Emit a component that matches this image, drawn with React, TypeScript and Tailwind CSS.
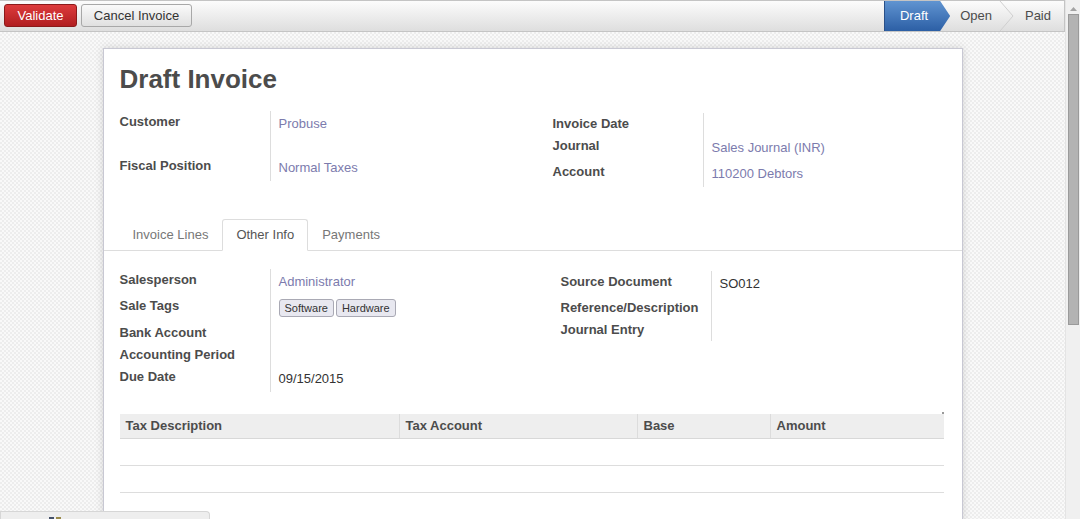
import React from "react"

type RowProps = {
  label: string
  h: string
  vp?: string
  children?: React.ReactNode
}

// one label / value line of a form group
function Row({ label, h, vp = "pt-[4px]", children }: RowProps) {
  return (
    <div className={`flex ${h}`}>
      <div className="w-[151px] shrink-0 border-r border-[#dddddd] pt-[2px] font-bold text-[#4c4c4c]">{label}</div>
      <div className={`flex-1 pl-[8px] ${vp}`}>{children}</div>
    </div>
  )
}

function Tag({ children }: { children: React.ReactNode }) {
  return (
    <span className="inline-block h-[18px] rounded-[3px] border border-[#a9a9b4] bg-[#e8e8f0] px-[5px] text-[11px] leading-[16px] text-[#333333]">
      {children}
    </span>
  )
}

const link = "text-[#7c7bad]"

export default function App() {
  return (
    <div className="flex h-[519px] w-[1080px] overflow-hidden bg-white font-['Liberation_Sans',Arial,sans-serif] text-[13px] leading-[18px] text-[#4c4c4c]">
      <div className="relative flex min-w-0 flex-1 flex-col">
        {/* top button bar */}
        <div className="flex h-[32px] shrink-0 items-stretch border-y border-[#c4c4c4] bg-linear-to-b from-[#fcfcfc] to-[#dedede]">
          <div className="flex flex-1 items-start gap-[4px] pl-[4px] pt-[3px]">
            <button className="flex h-[23px] w-[73px] items-center justify-center rounded-[3px] border border-[#8b1a1a] bg-linear-to-b from-[#dd3b3c] to-[#b11d20] text-white">
              Validate
            </button>
            <button className="flex h-[23px] w-[111px] items-center justify-center rounded-[3px] border border-[#a8a8a8] bg-linear-to-b from-[#fafafa] to-[#e0e0e0] text-[#333333]">
              Cancel Invoice
            </button>
          </div>
          <div className="flex items-stretch border-r border-[#c4c4c4]">
            <div className="flex items-center border-l border-[#2a5088] bg-linear-to-b from-[#6094d1] to-[#2c5fa5] pl-[15px] pr-[22px] text-white [clip-path:polygon(0_0,calc(100%-10px)_0,100%_50%,calc(100%-10px)_100%,0_100%)]">
              Draft
            </div>
            <div className="flex items-center pl-[10px]">Open</div>
            <svg className="ml-[7px] h-[30px] w-[16px]" viewBox="0 0 16 30">
              <polyline points="1,0 14,15 1,30" fill="none" stroke="#cfcfcf" strokeWidth="1" />
            </svg>
            <div className="flex items-center pl-[10px] pr-[13px]">Paid</div>
          </div>
        </div>

        {/* content area */}
        <div className="min-h-0 flex-1 overflow-hidden bg-[#f4f4f4] bg-[image:repeating-conic-gradient(#ededed_0%_25%,#f9f9f9_0%_50%)] bg-size-[4px_4px] pt-[16px]">
          <div className="mx-auto w-[860px] border border-[#c8c8d3] bg-white pb-[40px] shadow-[0_0_8px_rgba(0,0,0,0.15)]">
            <div className="px-[16px] pt-[15px]">
              <h1 className="text-[26px] font-bold leading-[30px] text-[#4c4c4c]">Draft Invoice</h1>

              <div className="mt-[17px] flex items-start">
                <div className="w-[433px]">
                  <Row label="Customer" h="h-[44px]" vp="pt-[4px]">
                    <span className={link}>Probuse</span>
                  </Row>
                  <Row label="Fiscal Position" h="h-[26px]" vp="pt-[4px]">
                    <span className={link}>Normal Taxes</span>
                  </Row>
                </div>
                <div className="mt-[2px] flex-1">
                  <Row label="Invoice Date" h="h-[22px]" />
                  <Row label="Journal" h="h-[26px]" vp="pt-[4px]">
                    <span className={link}>Sales Journal (INR)</span>
                  </Row>
                  <Row label="Account" h="h-[26px]" vp="pt-[4px]">
                    <span className={link}>110200 Debtors</span>
                  </Row>
                </div>
              </div>
            </div>

            {/* notebook tabs */}
            <ul className="mt-[32px] flex border-b border-[#dddddd] pl-[15px]">
              <li className="-mb-px border border-transparent px-[13px] py-[6px] text-[#777777]">Invoice Lines</li>
              <li className="-mb-px rounded-t-[3px] border border-[#dddddd] border-b-white bg-white px-[13px] py-[6px] text-[#555555]">
                Other Info
              </li>
              <li className="-mb-px border border-transparent px-[13px] py-[6px] text-[#777777]">Payments</li>
            </ul>

            <div className="px-[16px] pt-[18px]">
              <div className="flex items-start">
                <div className="w-[441px]">
                  <Row label="Salesperson" h="h-[26px]" vp="pt-[4px]">
                    <span className={link}>Administrator</span>
                  </Row>
                  <Row label="Sale Tags" h="h-[27px]" vp="pt-[4px]">
                    <div className="flex gap-[2px]">
                      <Tag>Software</Tag>
                      <Tag>Hardware</Tag>
                    </div>
                  </Row>
                  <Row label="Bank Account" h="h-[22px]" />
                  <Row label="Accounting Period" h="h-[22px]" />
                  <Row label="Due Date" h="h-[26px]" vp="pt-[4px]">
                    <span className="text-[#333333]">09/15/2015</span>
                  </Row>
                </div>
                <div className="mt-[2px] flex-1">
                  <Row label="Source Document" h="h-[26px]" vp="pt-[4px]">
                    <span className="text-[#333333]">SO012</span>
                  </Row>
                  <Row label="Reference/Description" h="h-[22px]" />
                  <Row label="Journal Entry" h="h-[22px]" />
                </div>
              </div>

              {/* tax lines table */}
              <div className="relative mt-[22px] w-[824px]">
                <span className="absolute -top-[2px] right-0 h-[2px] w-[2px] bg-[#999999]" />
                <div className="grid h-[25px] grid-cols-[279px_238px_133px_1fr] border-b border-[#d8d8d8] bg-[#eeeeee] font-bold text-[#4c4c4c]">
                  <div className="pl-[6px] pt-[3px]">Tax Description</div>
                  <div className="border-l border-[#dcdcdc] pl-[6px] pt-[3px]">Tax Account</div>
                  <div className="border-l border-[#dcdcdc] pl-[6px] pt-[3px]">Base</div>
                  <div className="border-l border-[#dcdcdc] pl-[6px] pt-[3px]">Amount</div>
                </div>
                <div className="h-[27px] border-b border-[#dddddd]" />
                <div className="h-[27px] border-b border-[#dddddd]" />
              </div>
            </div>
          </div>
        </div>

        {/* floating panel peeking at the bottom left */}
        <div className="absolute bottom-0 left-0 flex h-[8px] w-[210px] items-end gap-[2px] rounded-tr-[4px] border border-b-0 border-[#d6d6d6] bg-[#eeeeee] pl-[48px]">
          <span className="h-[2px] w-[5px] bg-[#44506a]" />
          <span className="h-[2px] w-[5px] bg-[#9a8a4a]" />
        </div>
      </div>

      {/* scrollbar */}
      <div className="flex w-[15px] shrink-0 flex-col items-center border-l border-[#e4e4e4] bg-[#f0f0f0]">
        <svg className="mt-[7px] h-[4px] w-[7px]" viewBox="0 0 7 4">
          <polygon points="3.5,0 7,4 0,4" fill="#a3a3a3" />
        </svg>
        <div className="mt-[3px] h-[311px] w-[11px] border border-[#9a9a9a] bg-[#b3b3b3]" />
      </div>
    </div>
  )
}
